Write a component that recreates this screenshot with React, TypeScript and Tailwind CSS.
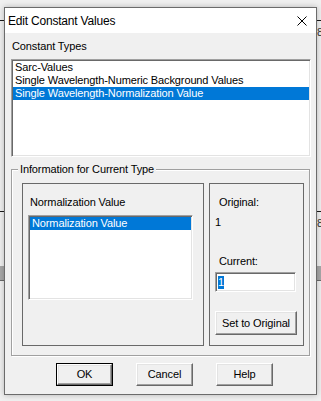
import { useState } from 'react';

const sunken =
  'border border-t-[#a0a0a0] border-l-[#a0a0a0] border-b-white border-r-white shadow-[inset_1px_1px_0_#696969,inset_-1px_-1px_0_#e3e3e3] bg-white';
const raised =
  'border border-t-white border-l-white border-b-[#696969] border-r-[#696969] shadow-[inset_-1px_-1px_0_#a0a0a0,inset_1px_1px_0_#e3e3e3] bg-[#f0f0f0]';

function Button({ label, width, isDefault }: { label: string; width: string; isDefault?: boolean }) {
  return (
    <div className={`${width} h-[23px] ${isDefault ? 'border border-black' : ''}`}>
      <div className={`${raised} w-full h-full flex items-center justify-center text-[11px] text-black`}>{label}</div>
    </div>
  );
}

function ListBox({ items, selected, className }: { items: string[]; selected: number; className: string }) {
  return (
    <div className={`${sunken} ${className} p-[1px]`}>
      {items.map((item, i) => (
        <div
          key={item}
          className={`h-[13px] leading-[13px] pl-[2px] whitespace-nowrap text-[11px] ${
            i === selected ? 'bg-[#0078d7] text-white' : 'text-black'
          }`}
        >
          {item}
        </div>
      ))}
    </div>
  );
}

export default function App() {
  const [current] = useState('1');
  return (
    <div className="relative w-[321px] h-[401px] bg-[#f0f0f0] overflow-hidden font-['Liberation_Sans',Arial,sans-serif] tracking-[-0.12px]">
      {/* Application behind the dialog */}
      <div className="flex flex-col">
        <div className="h-[20px]" />
        <div className="h-[1px] bg-[#1a1a1a]" />
        <div className="h-[6px]" />
        <div className="h-[10px] pl-[317px] text-[11px] leading-[10px] text-[#333]">8</div>
        <div className="h-[174px]" />
        <div className="h-[1px] bg-[#1a1a1a]" />
        <div className="h-[8px]" />
        <div className="h-[7px] pl-[317px] text-[11px] leading-[7px] text-[#333]">8</div>
        <div className="h-[16px]" />
        <div className="h-[23px]" />
        <div className="h-[14px] bg-[#a8a8a8]" />
        <div className="h-[1px] bg-[#6a6a6a]" />
      </div>

      {/* Dialog window */}
      <div className="absolute left-[4px] top-[7px] w-[313px] h-[388px] border border-[#6b6b6b] bg-[#f0f0f0] shadow-[0_0_6px_rgba(0,0,0,0.25)] flex flex-col">
        <div className="h-[25px] bg-white flex items-center justify-between pl-[3px] pr-[9px]">
          <span className="text-[12px] tracking-[-0.2px] text-black">Edit Constant Values</span>
          <svg width="10" height="10" viewBox="0 0 10 10" className="text-black">
            <path d="M0.5 0.5 L9.5 9.5 M9.5 0.5 L0.5 9.5" stroke="currentColor" strokeWidth="1" />
          </svg>
        </div>

        <div className="mt-[7px] h-[13px] pl-[7px] text-[11px] leading-[13px] text-black">Constant Types</div>
        <ListBox
          className="mt-[6px] ml-[6px] w-[300px] h-[98px]"
          selected={2}
          items={['Sarc-Values', 'Single Wavelength-Numeric Background Values', 'Single Wavelength-Normalization Value']}
        />

        {/* Group box */}
        <div className="relative mt-[12px] ml-[6px] w-[299px] h-[187px] border border-[#a0a0a0] shadow-[1px_1px_0_#fff,inset_1px_1px_0_#fff] pt-[13px] pl-[10px] flex gap-[5px]">
          <span className="absolute left-[6px] -top-[7px] px-[2px] bg-[#f0f0f0] text-[11px] leading-[13px] text-black">
            Information for Current Type
          </span>

          <div className="w-[182px] h-[163px] border border-[#696969] flex flex-col">
            <div className="mt-[12px] h-[13px] pl-[7px] text-[11px] leading-[13px] text-black">Normalization Value</div>
            <ListBox className="mt-[6px] ml-[5px] w-[165px] h-[85px]" selected={0} items={['Normalization Value']} />
          </div>

          <div className="w-[95px] h-[163px] border border-[#696969] flex flex-col">
            <div className="mt-[12px] h-[13px] pl-[9px] text-[11px] leading-[13px] text-black">Original:</div>
            <div className="mt-[7px] h-[13px] pl-[5px] text-[11px] leading-[13px] text-black">1</div>
            <div className="mt-[26px] h-[13px] pl-[9px] text-[11px] leading-[13px] text-black">Current:</div>
            <div className={`${sunken} mt-[4px] ml-[5px] w-[81px] h-[20px] flex items-center pl-[2px]`}>
              <span className="bg-[#0078d7] text-white text-[11px] leading-[13px]">{current}</span>
            </div>
            <div className="mt-[19px] ml-[5px]">
              <div className={`${raised} w-[82px] h-[24px] flex items-center justify-center text-[11px] text-black`}>
                Set to Original
              </div>
            </div>
          </div>
        </div>

        <div className="mt-[7px] pl-[51px] flex gap-[23px]">
          <Button label="OK" width="w-[57px]" isDefault />
          <Button label="Cancel" width="w-[57px]" />
          <Button label="Help" width="w-[57px]" />
        </div>
      </div>
    </div>
  );
}
